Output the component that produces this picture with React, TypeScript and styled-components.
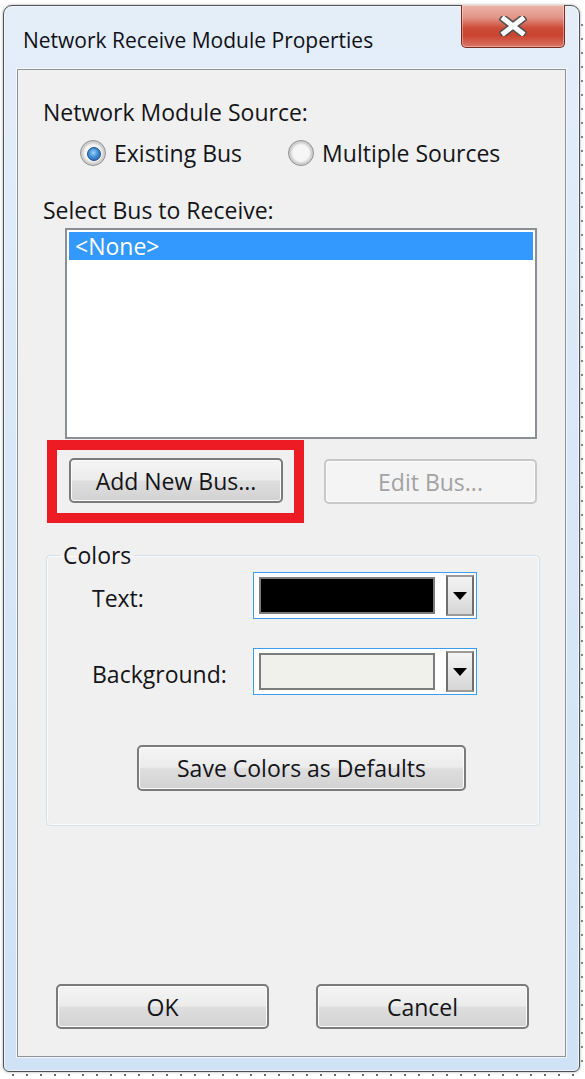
import React from "react";
import styled, { createGlobalStyle } from "styled-components";

const FONT = `"Open Sans", "Noto Sans", "DejaVu Sans", sans-serif`;
const TEXT_SIZE = 23;

const GlobalStyle = createGlobalStyle`
  html, body { margin: 0; padding: 0; background: #ffffff; }
  body { font-family: ${FONT}; color: #141418; width: 585px; height: 1079px; overflow: hidden; }
  * { box-sizing: border-box; }
`;

const Page = styled.div`
  width: 585px;
  height: 1079px;
  padding: 5px 0 0 3px;
  background:
    repeating-linear-gradient(90deg, #6a6a6a 0 2px, transparent 2px 14px) left 12px bottom 3px / 565px 2px no-repeat,
    repeating-linear-gradient(180deg, #8a8a8a 0 2px, transparent 2px 14px) left 581px top 24px / 2px 1040px no-repeat;
`;

const Window = styled.div`
  width: 577px;
  height: 1067px;
  border: 1px solid #4e5256;
  border-radius: 9px 9px 6px 6px;
  background: linear-gradient(to bottom, #e4eef9 0%, #d9e8f7 40%, #cfe2f6 100%);
  box-shadow: inset 0 0 0 1px rgba(255, 255, 255, 0.6), 0 0 3px rgba(0, 0, 0, 0.35);
  display: flex;
  flex-direction: column;
`;

const TitleBar = styled.div`
  height: 63px;
  display: flex;
  justify-content: space-between;
  align-items: flex-start;
  padding-left: 19px;
  padding-right: 14px;
`;

const Title = styled.div`
  padding-top: 20px;
  font-size: 21px;
  line-height: 28px;
  color: #101018;
`;

const CloseButton = styled.div`
  width: 104px;
  height: 43px;
  margin-top: -1px;
  border: 1px solid #7a2a20;
  border-top: none;
  border-radius: 0 0 5px 5px;
  background: linear-gradient(
    to bottom,
    #ebb4a9 0%,
    #e39486 30%,
    #cc4b38 55%,
    #c9432f 72%,
    #d97565 100%
  );
  box-shadow: inset 0 0 0 1px rgba(255, 255, 255, 0.35);
  display: flex;
  align-items: center;
  justify-content: center;
`;

const Client = styled.div`
  margin: 0 13px 14px 13px;
  height: 988px;
  border: 1px solid #8d9299;
  background: #f0f0f0;
  box-shadow: 0 0 0 1px rgba(255, 255, 255, 0.7);
  display: flex;
  flex-direction: column;
  align-items: flex-start;
  padding: 28px 0 27px 0;
`;

const FieldLabel = styled.div<{ $mt?: number }>`
  margin-left: 25px;
  margin-top: ${(p) => p.$mt ?? 0}px;
  font-size: ${TEXT_SIZE}px;
  line-height: 28px;
`;

const RadioRow = styled.div`
  margin-top: 13px;
  padding-left: 62px;
  display: flex;
  align-items: center;
  gap: 46px;
  height: 28px;
`;

const RadioOption = styled.label`
  display: flex;
  align-items: center;
  gap: 8px;
  font-size: ${TEXT_SIZE}px;
  line-height: 28px;
`;

const RadioCircle = styled.span<{ $checked?: boolean }>`
  position: relative;
  width: 26px;
  height: 26px;
  border-radius: 50%;
  border: 1px solid #8e8f8f;
  background: radial-gradient(circle at 50% 50%, #f6f6f6 0%, #f6f6f6 45%, #dcdcdc 62%, #c9c9c9 100%);
  box-shadow: inset 0 0 0 2px #d0d0d0;
  &::after {
    content: "";
    display: ${(p) => (p.$checked ? "block" : "none")};
    position: absolute;
    left: 6px;
    top: 6px;
    width: 12px;
    height: 12px;
    border-radius: 50%;
    border: 1px solid #1c4f85;
    background: radial-gradient(circle at 45% 40%, #9fd3fa 0%, #3f8fd6 45%, #1d5aa5 100%);
  }
`;

const ListBox = styled.div`
  margin-top: 4px;
  margin-left: 47px;
  width: 472px;
  height: 211px;
  border: 2px solid #8b8e92;
  background: #ffffff;
  padding: 2px;
`;

const ListItem = styled.div<{ $selected?: boolean }>`
  height: 28px;
  line-height: 28px;
  padding-left: 6px;
  font-size: ${TEXT_SIZE}px;
  background: ${(p) => (p.$selected ? "#3399ff" : "transparent")};
  color: ${(p) => (p.$selected ? "#ffffff" : "#141418")};
`;

const ButtonRow = styled.div`
  margin-top: 1px;
  display: flex;
  align-items: center;
  padding-left: 29px;
  gap: 20px;
`;

const Highlight = styled.div`
  border: 10px solid #ed1c24;
  padding: 8px 11px 10px 12px;
`;

const PushButton = styled.button<{ $w: number; $h?: number }>`
  width: ${(p) => p.$w}px;
  height: ${(p) => p.$h ?? 45}px;
  border: 2px solid #7b7b7b;
  border-radius: 5px;
  background: linear-gradient(to bottom, #f4f4f4 0%, #ececec 48%, #dedede 52%, #d2d2d2 100%);
  box-shadow: inset 0 0 0 1px #fbfbfb;
  font-family: ${FONT};
  font-size: ${TEXT_SIZE}px;
  line-height: 28px;
  color: #141418;
  padding: 0;
  display: flex;
  align-items: center;
  justify-content: center;
  &:disabled {
    border-color: #c6c8ca;
    background: #f4f4f4;
    box-shadow: inset 0 0 0 1px #fcfcfc;
    color: #a2a2a2;
  }
`;

const GroupBox = styled.fieldset`
  margin: 18px 0 0 28px;
  width: 494px;
  min-width: 0;
  padding: 0 0 34px 0;
  border: 1px solid #d5dfe5;
  border-radius: 4px;
  box-shadow: inset 0 0 0 1px #fbfbfb;
  display: flex;
  flex-direction: column;
  align-items: flex-start;
`;

const GroupLegend = styled.legend`
  margin-left: 13px;
  padding: 0 3px;
  font-size: ${TEXT_SIZE}px;
  line-height: 28px;
`;

const ColorRow = styled.div<{ $mt: number }>`
  margin-top: ${(p) => p.$mt}px;
  display: flex;
  align-items: center;
  padding-left: 45px;
`;

const RowLabel = styled.div`
  width: 161px;
  font-size: ${TEXT_SIZE}px;
  line-height: 28px;
  padding-top: 4px;
`;

const ColorCombo = styled.div`
  width: 224px;
  height: 47px;
  border: 1px solid #3c9cf2;
  background: #ffffff;
  display: flex;
  align-items: center;
  gap: 11px;
  padding: 0 2px 0 5px;
`;

const Swatch = styled.div<{ $color: string }>`
  width: 176px;
  height: 37px;
  border: 2px solid #7c7c7c;
  background: ${(p) => p.$color};
`;

const DropButton = styled.div`
  width: 28px;
  height: 41px;
  border: 2px solid #6f6f6f;
  border-top-color: #9a9a9a;
  border-bottom-color: #9a9a9a;
  background: linear-gradient(to bottom, #f3f3f3 0%, #e6e6e6 50%, #d6d6d6 100%);
  display: flex;
  align-items: center;
  justify-content: center;
  &::after {
    content: "";
    width: 0;
    height: 0;
    border-left: 7px solid transparent;
    border-right: 7px solid transparent;
    border-top: 8px solid #000000;
  }
`;

const SaveRow = styled.div`
  margin-top: 50px;
  padding-left: 90px;
`;

const Footer = styled.div`
  margin-top: auto;
  display: flex;
  padding-left: 38px;
  gap: 47px;
`;

const CloseGlyph = () => (
  <svg width="28" height="20" viewBox="0 0 28 20">
    <path d="M5 3 L23 17 M23 3 L5 17" stroke="#505050" strokeWidth="8" strokeLinecap="square" fill="none" />
    <path d="M5 3 L23 17 M23 3 L5 17" stroke="#ffffff" strokeWidth="5" strokeLinecap="square" fill="none" />
  </svg>
);

export default function App() {
  return (
    <>
      <GlobalStyle />
      <Page>
        <Window>
          <TitleBar>
            <Title>Network Receive Module Properties</Title>
            <CloseButton>
              <CloseGlyph />
            </CloseButton>
          </TitleBar>
          <Client>
            <FieldLabel>Network Module Source:</FieldLabel>
            <RadioRow>
              <RadioOption>
                <RadioCircle $checked />
                Existing Bus
              </RadioOption>
              <RadioOption>
                <RadioCircle />
                Multiple Sources
              </RadioOption>
            </RadioRow>
            <FieldLabel $mt={29}>Select Bus to Receive:</FieldLabel>
            <ListBox>
              <ListItem $selected>&lt;None&gt;</ListItem>
            </ListBox>
            <ButtonRow>
              <Highlight>
                <PushButton $w={214}>Add New Bus...</PushButton>
              </Highlight>
              <PushButton $w={213} disabled>
                Edit Bus...
              </PushButton>
            </ButtonRow>
            <GroupBox>
              <GroupLegend>Colors</GroupLegend>
              <ColorRow $mt={3}>
                <RowLabel>Text:</RowLabel>
                <ColorCombo>
                  <Swatch $color="#000000" />
                  <DropButton />
                </ColorCombo>
              </ColorRow>
              <ColorRow $mt={29}>
                <RowLabel>Background:</RowLabel>
                <ColorCombo>
                  <Swatch $color="#f1f1ec" />
                  <DropButton />
                </ColorCombo>
              </ColorRow>
              <SaveRow>
                <PushButton $w={329} $h={46}>
                  Save Colors as Defaults
                </PushButton>
              </SaveRow>
            </GroupBox>
            <Footer>
              <PushButton $w={213}>OK</PushButton>
              <PushButton $w={213}>Cancel</PushButton>
            </Footer>
          </Client>
        </Window>
      </Page>
    </>
  );
}
